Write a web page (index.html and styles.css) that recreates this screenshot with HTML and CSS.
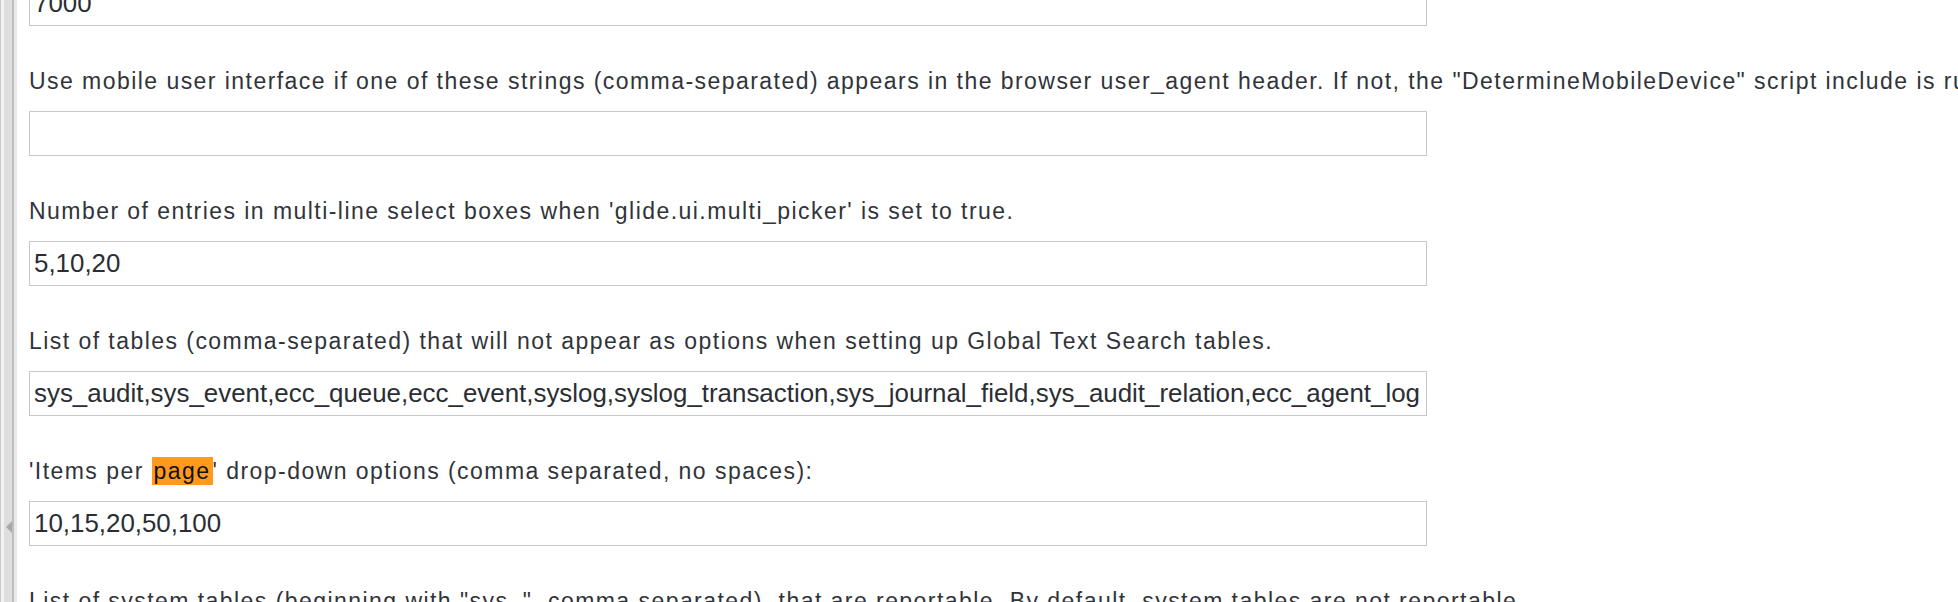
FILE: index.html
```html
<!DOCTYPE html>
<html lang="en">
<head>
  <meta charset="UTF-8" />
  <title>System Properties - UI Properties</title>
  <link rel="stylesheet" href="styles.css">
</head>
<body>
  <div class="splitter">
    <span class="splitter-arrow"></span>
  </div>

  <form class="props" onsubmit="return false;">
    <div class="prop">
      <input type="text" class="prop-input" value="7000" />
    </div>

    <div class="prop">
      <label class="prop-label">Use mobile user interface if one of these strings (comma-separated) appears in the browser user_agent header. If not, the "DetermineMobileDevice" script include is run to determine the device type.</label>
      <input type="text" class="prop-input" value="" />
    </div>

    <div class="prop">
      <label class="prop-label">Number of entries in multi-line select boxes when 'glide.ui.multi_picker' is set to true.</label>
      <input type="text" class="prop-input" value="5,10,20" />
    </div>

    <div class="prop">
      <label class="prop-label">List of tables (comma-separated) that will not appear as options when setting up Global Text Search tables.</label>
      <input type="text" class="prop-input" value="sys_audit,sys_event,ecc_queue,ecc_event,syslog,syslog_transaction,sys_journal_field,sys_audit_relation,ecc_agent_log" />
    </div>

    <div class="prop">
      <label class="prop-label">'Items per <span class="hit">page</span>' drop-down options (comma separated, no spaces):</label>
      <input type="text" class="prop-input" value="10,15,20,50,100" />
    </div>

    <div class="prop">
      <label class="prop-label">List of system tables (beginning with "sys_", comma separated), that are reportable. By default, system tables are not reportable.</label>
      <input type="text" class="prop-input" value="" />
    </div>
  </form>
</body>
</html>
```

FILE: styles.css
```css
html, body { height: 100%; }
body { margin: 0; display: flex; overflow: hidden; background: #fff; font-family: "Liberation Sans", Arial, sans-serif; color: #30343a; }

.splitter { flex: 0 0 17px; display: flex; flex-direction: column; box-sizing: border-box; border-left: 1px solid #c9c9c9; background: linear-gradient(to right, #f2f2f2 0, #f2f2f2 3px, #dedede 3px, #dedede 11px, #bdbdbd 11px, #bdbdbd 13px, #e9e9e9 13px, #e9e9e9 16px); }
.splitter-arrow { margin: 521px 0 0 5px; width: 0; height: 0; border-top: 6px solid transparent; border-bottom: 6px solid transparent; border-right: 6px solid #a9a9a9; }

.props { flex: 1; min-width: 0; margin: -19px 0 0; padding-left: 12px; }
.prop { margin-bottom: 40px; }
.prop-label { display: block; white-space: nowrap; font-size: 23px; letter-spacing: 1.45px; line-height: 30px; margin-bottom: 15px; }
.prop-input { display: block; box-sizing: border-box; width: 1398px; height: 45px; margin: 0; padding: 0 4px; border: 1px solid #c8c8c8; border-radius: 0; font-family: "Liberation Sans", Arial, sans-serif; font-size: 25.9px; color: #2a2e33; background: #fff; outline: none; }
.hit { background: #ff9a1f; color: #111; padding: 1px 2px; }
```
